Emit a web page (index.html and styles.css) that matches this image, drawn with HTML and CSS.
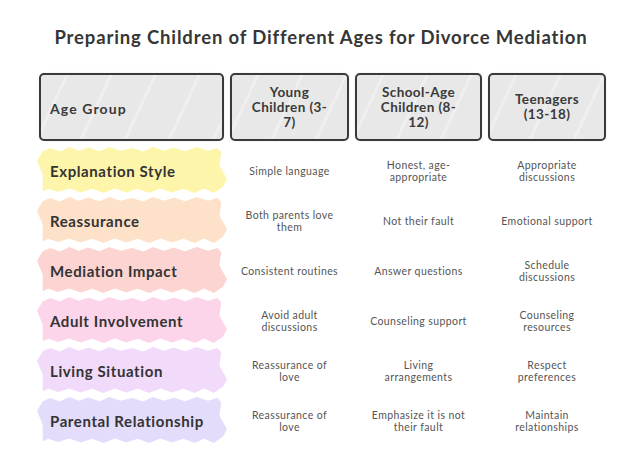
FILE: index.html
```html
<!DOCTYPE html>
<html lang="en">
<head>
<meta charset="utf-8">
<title>Preparing Children of Different Ages for Divorce Mediation</title>
<link rel="stylesheet" href="styles.css">
</head>
<body>
<main class="page">
  <h1 class="title">Preparing Children of Different Ages for Divorce Mediation</h1>
  <div class="table">
    <div class="head head-label">Age Group</div>
    <div class="head">Young<br>Children (3-<br>7)</div>
    <div class="head">School-Age<br>Children (8-<br>12)</div>
    <div class="head">Teenagers<br>(13-18)</div>

    <div class="label"><span class="strip yellow"></span><span class="label-text">Explanation Style</span></div>
    <div class="cell">Simple language</div>
    <div class="cell">Honest, age-<br>appropriate</div>
    <div class="cell">Appropriate<br>discussions</div>

    <div class="label"><span class="strip peach"></span><span class="label-text">Reassurance</span></div>
    <div class="cell">Both parents love<br>them</div>
    <div class="cell">Not their fault</div>
    <div class="cell">Emotional support</div>

    <div class="label"><span class="strip salmon"></span><span class="label-text">Mediation Impact</span></div>
    <div class="cell">Consistent routines</div>
    <div class="cell">Answer questions</div>
    <div class="cell">Schedule<br>discussions</div>

    <div class="label"><span class="strip pink"></span><span class="label-text">Adult Involvement</span></div>
    <div class="cell">Avoid adult<br>discussions</div>
    <div class="cell">Counseling support</div>
    <div class="cell">Counseling<br>resources</div>

    <div class="label"><span class="strip lilac"></span><span class="label-text">Living Situation</span></div>
    <div class="cell">Reassurance of<br>love</div>
    <div class="cell">Living<br>arrangements</div>
    <div class="cell">Respect<br>preferences</div>

    <div class="label"><span class="strip periwinkle"></span><span class="label-text">Parental Relationship</span></div>
    <div class="cell">Reassurance of<br>love</div>
    <div class="cell">Emphasize it is not<br>their fault</div>
    <div class="cell">Maintain<br>relationships</div>
  </div>
</main>
</body>
</html>
```

FILE: styles.css
```css
html, body {
  margin: 0;
  padding: 0;
  background: #ffffff;
}

body {
  width: 642px;
  height: 475px;
  overflow: hidden;
  font-family: "Lato", "Open Sans", "DejaVu Sans", sans-serif;
  color: #333333;
}

.page {
  display: flex;
  flex-direction: column;
  align-items: center;
}

.title {
  margin: 27px 0 0;
  font-size: 18.5px;
  line-height: 20px;
  font-weight: 700;
  color: #363636;
  letter-spacing: 0.85px;
}

.table {
  margin-top: 26px;
  align-self: flex-start;
  margin-left: 39px;
  display: grid;
  grid-template-columns: 185px 119px 127px 118px;
  grid-template-rows: 73px repeat(6, 50px);
  column-gap: 6px;
}

.head {
  margin-bottom: 5px;
  box-sizing: border-box;
  border: 2.5px solid #3a3a3a;
  border-radius: 5px;
  background-color: #e8e8e8;
  background-image: repeating-linear-gradient(115deg, transparent 0 22px, rgba(255,255,255,0.3) 22px 25px, transparent 25px 40px);
  display: flex;
  align-items: center;
  justify-content: center;
  text-align: center;
  font-size: 13.5px;
  line-height: 15px;
  font-weight: 700;
  letter-spacing: 0.4px;
  color: #3a3a3a;
  padding: 0 6px;
  box-shadow: 0 0 3px rgba(0,0,0,0.08);
}

.head-label {
  justify-content: flex-start;
  text-align: left;
  padding-left: 9px;
  padding-top: 3px;
  font-size: 14px;
  letter-spacing: 1.1px;
}

.label {
  position: relative;
  display: flex;
  align-items: center;
}

.strip {
  position: absolute;
  left: -2px;
  right: -3px;
  top: 1px;
  bottom: 3px;
  clip-path: polygon(
    3% 9%, 7% 2%, 12% 10%, 17% 0%, 22% 8%, 27% 1%, 33% 9%, 38% 0%, 44% 8%, 50% 2%, 56% 10%, 61% 0%, 67% 8%, 72% 1%, 78% 9%, 84% 0%, 90% 8%, 95% 2%, 97% 12%,
    96% 40%, 100% 70%, 98% 86%, 93% 100%, 88% 90%, 83% 100%, 77% 91%, 71% 99%, 65% 90%, 59% 100%, 53% 91%, 47% 99%, 41% 90%, 35% 100%, 29% 91%, 23% 99%, 17% 90%, 11% 98%, 6% 91%, 3% 96%,
    3% 60%, 0% 30%
  );
}

.yellow { background: #fdf6aa; }
.peach { background: #fde1c8; }
.salmon { background: #fcd4d2; }
.pink { background: #fcd5ea; }
.lilac { background: #f2dafa; }
.periwinkle { background: #e3dcfb; }

.label-text {
  position: relative;
  padding-left: 11px;
  font-size: 15px;
  font-weight: 700;
  letter-spacing: 0.6px;
  color: #333333;
}

.cell {
  display: flex;
  align-items: center;
  justify-content: center;
  text-align: center;
  font-size: 10.5px;
  line-height: 12.5px;
  letter-spacing: 0.4px;
  color: #555555;
}
```
